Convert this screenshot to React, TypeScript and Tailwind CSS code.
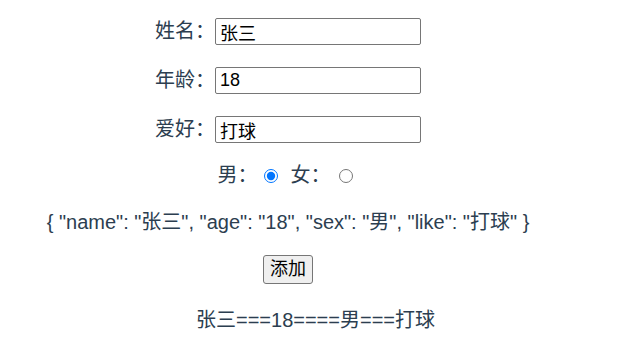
import React from "react";

export default function App() {
  const font = { fontFamily: '"Liberation Sans", Arial, "Noto Sans CJK SC", sans-serif' };
  const inputCls =
    "w-[206px] h-[27px] border border-[#767676] rounded-[2px] pl-[4px] pr-[2px] text-[18px] text-black outline-none bg-white";
  return (
    <div
      className="w-[631px] h-[355px] bg-white text-[#2c3e50] text-[20px] leading-[23px] flex flex-col"
      style={font}
    >
      <div className="pr-[55px] flex flex-col items-center pt-[18px]">
        <div className="flex items-center h-[27px]">
          <span className="w-[60px]">姓名：</span>
          <input readOnly value="张三" className={inputCls} style={font} />
        </div>
        <div className="flex items-center h-[27px] mt-[22px]">
          <span className="w-[60px]">年龄：</span>
          <input readOnly value="18" className={inputCls} style={font} />
        </div>
        <div className="flex items-center h-[27px] mt-[22px]">
          <span className="w-[60px]">爱好：</span>
          <input readOnly value="打球" className={inputCls} style={font} />
        </div>
        <div className="flex items-center h-[23px] mt-[21px] pr-[6px]">
          <span>男：</span>
          <input type="radio" name="sex" defaultChecked className="ml-[6px] mr-[13px] w-[14px] h-[14px] m-0" />
          <span>女：</span>
          <input type="radio" name="sex" className="ml-[8px] w-[14px] h-[14px] m-0" />
        </div>
        <div className="h-[23px] mt-[24px] whitespace-pre">
          {'{ "name": "张三", "age": "18", "sex": "男", "like": "打球" }'}
        </div>
        <div className="mt-[21px]">
          <button
            className="h-[29px] px-[6px] border border-[#767676] rounded-[3px] bg-[#efefef] text-black text-[18px] leading-[21px]"
            style={font}
          >
            添加
          </button>
        </div>
      </div>
      <div className="flex justify-center mt-[25px] h-[23px]">张三===18====男===打球</div>
    </div>
  );
}
